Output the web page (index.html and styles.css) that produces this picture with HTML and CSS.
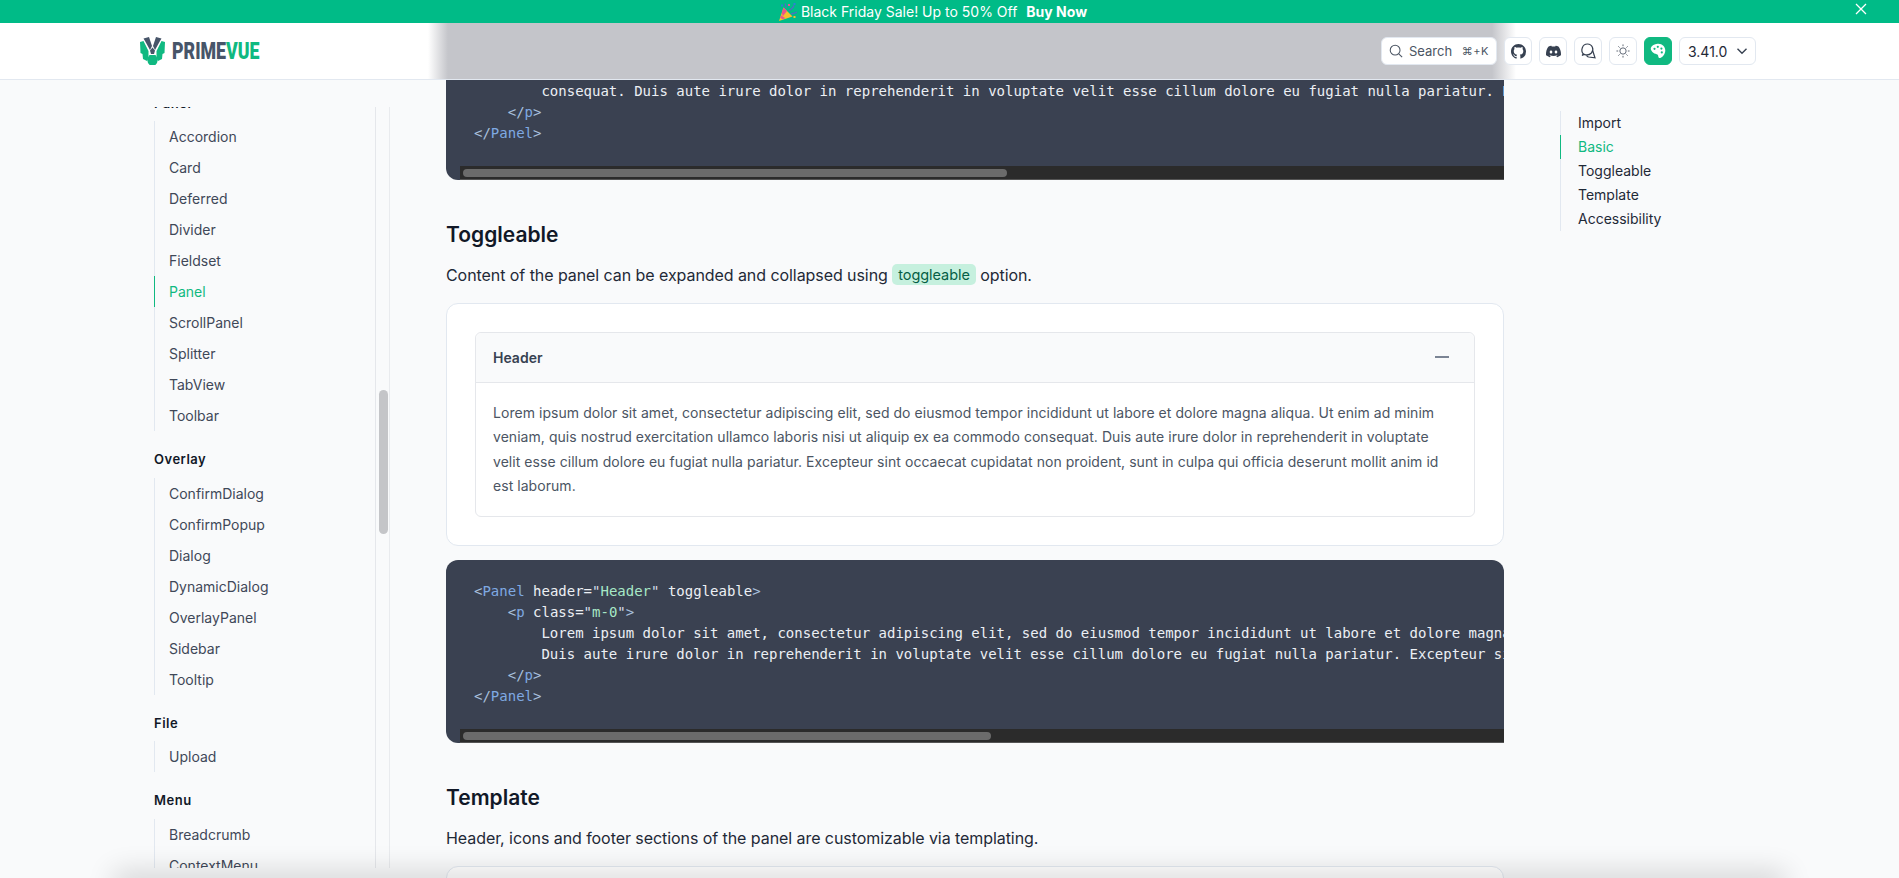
FILE: index.html
```html
<!DOCTYPE html>
<html lang="en">
<head>
    <meta charset="UTF-8">
    <meta name="viewport" content="width=device-width, initial-scale=1.0">
    <title>Panel - PrimeVue</title>
    <link rel="stylesheet" href="styles.css">
</head>
<body>

    <div class="banner">
        <svg class="popper" viewBox="0 0 18 18" width="18" height="18">
            <polygon points="0,18 4.500,4.500 13.500,13.500" fill="#f6c02d"/>
            <polygon points="2.700,10 4.500,4.500 8,8 3.900,13.200" fill="#e8558f"/>
            <polygon points="1.100,14.800 2,12.300 6.500,15.200 3.500,16.300" fill="#e8558f"/>
            <path d="M7 5 C7.500 3 6.500 2 6 .5 M10 8 C12 5 14 6 15 2.500 M12 11 C14 10 16 11 18 9" fill="none" stroke="#4f6bc8" stroke-width="1.200"/>
            <rect x="9" y="1" width="2" height="2" fill="#e8558f"/>
            <rect x="14.500" y="0" width="2" height="2" fill="#2f7fd6"/>
            <rect x="14.500" y="13" width="2" height="2" fill="#f6c02d"/>
            <rect x="2" y="1.500" width="2" height="2" fill="#2f7fd6"/>
        </svg>
        <span class="banner-text">Black Friday Sale! Up to 50% Off</span>
        <b class="banner-link">Buy Now</b>
        <svg class="banner-close" viewBox="0 0 12 12" width="12" height="12">
            <path d="M1 1 L11 11 M11 1 L1 11" stroke="#fff" stroke-width="1.300" fill="none"/>
        </svg>
    </div>

    <header class="topbar">
        <a class="logo">
            <svg viewBox="0 0 25 28.500" width="25" height="28.500">
                <polygon points="0,5 3.500,4 8.500,14 8.500,20 7,24 3,22 2.500,17 .5,16" fill="#10b981"/>
                <polygon points="25,5 21.500,4 16.500,14 16.500,20 18,24 22,22 22.500,17 24.500,16" fill="#10b981"/>
                <polygon points="9.500,18 15.500,18 18,22 17,26 15,28.500 10,28.500 8,26 7,22" fill="#10b981"/>
                <polygon points="3.500,1.500 9,0 12,9 10,13 5,4" fill="#475569"/>
                <polygon points="21.500,1.500 16,0 13,9 15,13 20,4" fill="#475569"/>
                <polygon points="10,13.500 12.500,10.500 15,13.500 14,17 11,17" fill="#475569"/>
            </svg>
            <span class="logo-name">PRIME<span class="logo-vue">VUE</span></span>
        </a>
        <div class="tools">
            <button class="search">
                <svg viewBox="0 0 16 16" width="14" height="14"><circle cx="7" cy="7" r="5.600" fill="none" stroke="#4b5563" stroke-width="1.200"/><path d="M11.200 11.200 L15 15" stroke="#4b5563" stroke-width="1.200"/></svg>
                <span class="search-label">Search</span>
                <span class="search-keys">⌘+K</span>
            </button>
            <button class="tool">
                <svg viewBox="0 0 16 16" width="15" height="15"><path fill="#374151" d="M8 0C3.580 0 0 3.580 0 8c0 3.540 2.290 6.530 5.470 7.590.4.070.55-.17.55-.38 0-.19-.01-.82-.01-1.490-2.010.37-2.530-.49-2.690-.94-.09-.23-.48-.94-.82-1.130-.28-.15-.68-.52-.01-.53.63-.01 1.080.58 1.230.82.72 1.210 1.870.87 2.330.66.07-.52.28-.87.51-1.070-1.780-.2-3.640-.89-3.640-3.950 0-.87.31-1.590.82-2.150-.08-.2-.36-1.020.08-2.120 0 0 .67-.21 2.200.82.64-.18 1.320-.27 2-.27.68 0 1.360.09 2 .27 1.530-1.040 2.200-.82 2.200-.82.44 1.100.16 1.920.08 2.120.51.56.82 1.270.82 2.150 0 3.070-1.870 3.750-3.650 3.950.29.25.54.73.54 1.480 0 1.070-.01 1.930-.01 2.200 0 .21.15.46.55.38A8.013 8.013 0 0016 8c0-4.420-3.580-8-8-8z"/></svg>
            </button>
            <button class="tool">
                <svg viewBox="0 0 16 16" width="15" height="15"><path fill="#374151" d="M13.545 2.907a13.227 13.227 0 0 0-3.257-1.011.05.05 0 0 0-.052.025c-.141.25-.297.577-.406.833a12.19 12.19 0 0 0-3.658 0 8.258 8.258 0 0 0-.412-.833.051.051 0 0 0-.052-.025c-1.125.194-2.22.534-3.257 1.011a.041.041 0 0 0-.021.018C.356 6.024-.213 9.047.066 12.032c.001.014.01.028.021.037a13.276 13.276 0 0 0 3.995 2.02.05.05 0 0 0 .056-.019c.308-.42.582-.863.818-1.329a.05.05 0 0 0-.01-.059.051.051 0 0 0-.018-.011 8.875 8.875 0 0 1-1.248-.595.05.05 0 0 1-.02-.066.051.051 0 0 1 .015-.019c.084-.063.168-.129.248-.195a.05.05 0 0 1 .051-.007c2.619 1.196 5.454 1.196 8.041 0a.052.052 0 0 1 .053.007c.08.066.164.132.248.195a.051.051 0 0 1-.004.085 8.254 8.254 0 0 1-1.249.594.05.05 0 0 0-.03.03.052.052 0 0 0 .003.041c.24.465.515.909.817 1.329a.05.05 0 0 0 .056.019 13.235 13.235 0 0 0 4.001-2.02.049.049 0 0 0 .021-.037c.334-3.451-.559-6.449-2.366-9.106a.034.034 0 0 0-.02-.019Zm-8.198 7.307c-.789 0-1.438-.724-1.438-1.612 0-.889.637-1.613 1.438-1.613.807 0 1.45.73 1.438 1.613 0 .888-.637 1.612-1.438 1.612Zm5.316 0c-.788 0-1.438-.724-1.438-1.612 0-.889.637-1.613 1.438-1.613.807 0 1.451.73 1.438 1.613 0 .888-.631 1.612-1.438 1.612Z"/></svg>
            </button>
            <button class="tool">
                <svg viewBox="0 0 16 16" width="16" height="16" fill="none" stroke="#374151" stroke-width="1.200"><path d="M3.400 11 C.2 7.500 2.400 1 7.400 1 C12.400 1 14.400 6.800 11.400 10 C9.400 12 6.200 12.200 4.200 11.400 L2 12.400 Z"/><path d="M12.800 8 L15 14.800 L8.600 14 C7.800 13.800 7 13.200 6.600 12.200"/></svg>
            </button>
            <button class="tool">
                <svg viewBox="0 0 16 16" width="14" height="14" fill="none" stroke="#4b5563" stroke-width="1"><circle cx="8" cy="8" r="3.600"/><path d="M8 .5v2M8 13.500v2M.5 8h2M13.500 8h2M2.700 2.700l1.400 1.400M11.900 11.900l1.400 1.400M2.700 13.300l1.400-1.400M11.900 4.100l1.400-1.400"/></svg>
            </button>
            <button class="tool tool-active">
                <svg viewBox="0 0 16 16" width="16" height="16"><path fill="#fff" d="M7.600.8C12 .4 15.400 3.600 15.300 7.600c-.1 3.600-2.600 6.600-5 7.400-1.200.4-2-.4-2-1.400 0-1.400-.6-2-1.600-2.400C5 10.600 3.600 10.400 2.400 9 1 7.400.5 6 .9 4.800 1.600 2.700 4.500 1.100 7.600.8Z"/><circle cx="4.500" cy="5.800" r="1.100" fill="#10b981"/><circle cx="7.800" cy="3.800" r="1.100" fill="#10b981"/><circle cx="11.400" cy="5.600" r="1.100" fill="#10b981"/><circle cx="11.800" cy="9.400" r="1.100" fill="#10b981"/></svg>
            </button>
            <button class="version">
                <span>3.41.0</span>
                <svg viewBox="0 0 12 12" width="12" height="12"><path d="M1.500 3.800 L6 8.200 L10.500 3.800" fill="none" stroke="#374151" stroke-width="1.400"/></svg>
            </button>
        </div>
    </header>

    <div class="layout">
        <nav class="sidebar">
            <div class="menu">
                <div class="menu-title">Panel</div>
                <ul class="menu-list">
                    <li>Accordion</li>
                    <li>Card</li>
                    <li>Deferred</li>
                    <li>Divider</li>
                    <li>Fieldset</li>
                    <li class="active">Panel</li>
                    <li>ScrollPanel</li>
                    <li>Splitter</li>
                    <li>TabView</li>
                    <li>Toolbar</li>
                </ul>
                <div class="menu-title">Overlay</div>
                <ul class="menu-list">
                    <li>ConfirmDialog</li>
                    <li>ConfirmPopup</li>
                    <li>Dialog</li>
                    <li>DynamicDialog</li>
                    <li>OverlayPanel</li>
                    <li>Sidebar</li>
                    <li>Tooltip</li>
                </ul>
                <div class="menu-title">File</div>
                <ul class="menu-list">
                    <li>Upload</li>
                </ul>
                <div class="menu-title">Menu</div>
                <ul class="menu-list">
                    <li>Breadcrumb</li>
                    <li>ContextMenu</li>
                    <li>Dock</li>
                </ul>
            </div>
        </nav>
        <div class="gutter"><div class="gutter-thumb"></div></div>

        <main class="content">
            <div class="code code-first">
<pre>        consequat. Duis aute irure dolor in reprehenderit in voluptate velit esse cillum dolore eu fugiat nulla pariatur. Excepteur sint occaecat
    <span class="p">&lt;/</span><span class="t">p</span><span class="p">&gt;</span>
<span class="p">&lt;/</span><span class="t">Panel</span><span class="p">&gt;</span></pre>
                <div class="code-track"><div class="code-thumb" style="width: 544px"></div></div>
            </div>

            <h2>Toggleable</h2>
            <p class="lead">Content of the panel can be expanded and collapsed using <code class="chip">toggleable</code> option.</p>
            <div class="card">
                <div class="panel">
                    <div class="panel-header">
                        <span>Header</span>
                        <span class="panel-minus"></span>
                    </div>
                    <p class="panel-body">Lorem ipsum dolor sit amet, consectetur adipiscing elit, sed do eiusmod tempor incididunt ut labore et dolore magna aliqua. Ut enim ad minim veniam, quis nostrud exercitation ullamco laboris nisi ut aliquip ex ea commodo consequat. Duis aute irure dolor in reprehenderit in voluptate velit esse cillum dolore eu fugiat nulla pariatur. Excepteur sint occaecat cupidatat non proident, sunt in culpa qui officia deserunt mollit anim id est laborum.</p>
                </div>
            </div>
            <div class="code">
<pre><span class="p">&lt;</span><span class="t">Panel</span> header=<span class="q">"</span><span class="s">Header</span><span class="q">"</span> toggleable<span class="p">&gt;</span>
    <span class="p">&lt;</span><span class="t">p</span> class=<span class="q">"</span><span class="s">m-0</span><span class="q">"</span><span class="p">&gt;</span>
        Lorem ipsum dolor sit amet, consectetur adipiscing elit, sed do eiusmod tempor incididunt ut labore et dolore magna aliqua.
        Duis aute irure dolor in reprehenderit in voluptate velit esse cillum dolore eu fugiat nulla pariatur. Excepteur sint occaecat
    <span class="p">&lt;/</span><span class="t">p</span><span class="p">&gt;</span>
<span class="p">&lt;/</span><span class="t">Panel</span><span class="p">&gt;</span></pre>
                <div class="code-track"><div class="code-thumb" style="width: 528px"></div></div>
            </div>

            <h2>Template</h2>
            <p class="lead">Header, icons and footer sections of the panel are customizable via templating.</p>
            <div class="card card-cut"></div>
        </main>

        <aside class="toc">
            <ul>
                <li>Import</li>
                <li class="active">Basic</li>
                <li>Toggleable</li>
                <li>Template</li>
                <li>Accessibility</li>
            </ul>
        </aside>
    </div>

    <div class="page-shadow"></div>

</body>
</html>
```

FILE: styles.css
```css
* {
    box-sizing: border-box;
}
html, body {
    height: 878px;
    overflow: hidden;
}
body {
    margin: 0;
    position: relative;
    background: #f9fafb;
    color: #111827;
    font-family: Inter, "Noto Sans", sans-serif;
    font-size: 14px;
}
ul {
    list-style: none;
    margin: 0;
    padding: 0;
}

/* top banner */
.banner {
    position: relative;
    z-index: 3;
    display: flex;
    align-items: center;
    justify-content: center;
    height: 23px;
    background: #00bb87;
    color: #fff;
    padding-right: 33px;
}
.popper {
    margin-right: 4px;
}
.banner-text {
    font-size: 14px;
}
.banner-link {
    margin-left: 9px;
    font-weight: 700;
    font-size: 14px;
}
.banner-close {
    position: absolute;
    right: 32px;
    top: 3px;
}

.topbar {
    position: absolute;
    z-index: 2;
    top: 23px;
    left: 0;
    right: 0;
    height: 57px;
    display: flex;
    align-items: center;
    justify-content: space-between;
    padding: 0 143px 0 140px;
    background: #fff;
    border-bottom: 1px solid #e2e8f0;
}
.topbar::before {
    content: "";
    position: absolute;
    top: 0;
    bottom: 0;
    left: 428px;
    width: 1088px;
    background: linear-gradient(to right, rgba(196, 197, 202, 0), #c4c5ca 20px, #c4c5ca 1064px, rgba(196, 197, 202, 0));
}
.logo, .tools {
    position: relative;
}
.logo {
    display: flex;
    align-items: center;
    gap: 7px;
}
.logo-name {
    display: block;
    width: 88px;
    font-family: Roboto, sans-serif;
    font-weight: 900;
    font-size: 24px;
    line-height: 28px;
    white-space: nowrap;
    color: #475569;
    transform: scaleX(0.74);
    transform-origin: left center;
}
.logo-vue {
    color: #10b981;
}
.tools {
    display: flex;
    gap: 7px;
    height: 28px;
}
button {
    display: flex;
    align-items: center;
    height: 28px;
    padding: 0;
    background: #fff;
    border: 1px solid #e2e8f0;
    border-radius: 6px;
    font-family: inherit;
    color: #4b5563;
}
.search {
    width: 116px;
    padding: 0 7px;
}
.search-label {
    margin-left: 6px;
    font-size: 13px;
}
.search-keys {
    margin-left: auto;
    font-size: 11px;
    letter-spacing: 0.5px;
}
.tool {
    width: 28px;
    justify-content: center;
}
.tool-active {
    background: #10b981;
    border-color: #10b981;
}
.version {
    width: 77px;
    padding: 0 7px 0 8px;
    justify-content: space-between;
    font-size: 14px;
    color: #1f2937;
}

/* page columns */
.layout {
    display: flex;
    height: 855px;
    padding-left: 154px;
}
.sidebar {
    flex: none;
    width: 222px;
    height: 761px;
    margin-top: 84px;
    overflow: hidden;
    border-right: 1px solid #e5e7eb;
}
.gutter {
    flex: none;
    width: 14px;
    height: 761px;
    margin-top: 84px;
    padding: 283px 1px 0 3px;
    border-right: 1px solid #e9ebee;
}
.gutter-thumb {
    height: 144px;
    background: #c4c5c8;
    border-radius: 5px;
}
.menu {
    margin-top: -14.5px;
}
.menu-title {
    margin-top: 18px;
    margin-bottom: 7.5px;
    font-size: 13px;
    line-height: 21px;
    font-weight: 600;
    letter-spacing: 0.5px;
    color: #111827;
}
.menu-title:first-child {
    margin-top: 0;
}
.menu-list {
    border-left: 1px solid #e2e8f0;
}
.menu-list li {
    height: 31px;
    line-height: 31px;
    margin-left: -1px;
    padding-left: 14px;
    border-left: 1px solid transparent;
    color: #3f4858;
}
.menu-list li.active {
    color: #10b981;
    border-left-color: #10b981;
}

/* main column */
.content {
    flex: none;
    width: 1058px;
    margin-left: 56px;
    overflow: hidden;
}
.code {
    position: relative;
    height: 183px;
    background: #3a4151;
    border-radius: 12px 12px 0 12px;
    overflow: hidden;
}
.code-first {
    margin-top: 57px;
    height: 100px;
    border-radius: 0 0 0 12px;
}
.code pre {
    margin: 0;
    padding: 21px 28px;
    font-family: "DejaVu Sans Mono", monospace;
    font-size: 14px;
    line-height: 21px;
    color: #eceff4;
}
.code-first pre {
    padding-top: 1px;
}
.code .p { color: #a9c0de; }
.code .t { color: #7fa9e2; }
.code .q { color: #d8dee9; }
.code .s { color: #a7e8c6; }
.code-track {
    position: absolute;
    left: 14px;
    right: 0;
    bottom: 0;
    height: 14px;
    padding-top: 3px;
    padding-left: 3px;
    background: #2b2b2b;
    border-bottom: 1px solid #555;
}
.code-thumb {
    height: 8px;
    background: #6b6b6b;
    border-radius: 4px;
}
h2 {
    margin: 42px 0 15px;
    font-size: 21px;
    line-height: 26px;
    font-weight: 600;
    color: #111827;
}
.lead {
    margin: 0 0 16px;
    font-size: 16px;
    line-height: 24px;
    letter-spacing: -0.065px;
    color: #1f2937;
}
.chip {
    display: inline-block;
    vertical-align: 1px;
    padding: 0 6px;
    height: 21px;
    line-height: 21px;
    background: #c6f0de;
    border-radius: 5px;
    font-family: Inter, sans-serif;
    font-size: 14.5px;
    color: #065f46;
}
.card {
    height: 243px;
    margin-bottom: 14px;
    padding: 28px;
    background: #fff;
    border: 1px solid #e2e8f0;
    border-radius: 12px;
}
.panel {
    border: 1px solid #e5e7eb;
    border-radius: 6px;
}
.panel-header {
    display: flex;
    align-items: center;
    justify-content: space-between;
    height: 50px;
    padding: 0 17px 1px;
    background: #f9fafb;
    border-bottom: 1px solid #e5e7eb;
    border-radius: 6px 6px 0 0;
    font-weight: 600;
    color: #374151;
}
.panel-minus {
    width: 14px;
    height: 2px;
    margin-right: 8px;
    background: #7b8494;
}
.panel-body {
    margin: 0;
    padding: 17.5px 17px 17px;
    font-size: 14px;
    line-height: 24.5px;
    letter-spacing: 0.05px;
    color: #4b5563;
}

/* page contents list */
.toc {
    margin-left: 56px;
    margin-top: 88px;
}
.toc ul {
    border-left: 1px solid #e2e8f0;
}
.toc li {
    height: 24px;
    line-height: 24px;
    margin-left: -1px;
    padding-left: 17px;
    border-left: 1px solid transparent;
    color: #1f2937;
}
.toc li.active {
    color: #10b981;
    border-left-color: #10b981;
}

/* soft shadow of whatever is below the fold */
.page-shadow {
    position: absolute;
    z-index: 1;
    left: 120px;
    right: 120px;
    bottom: -12px;
    height: 12px;
    box-shadow: 0 0 28px 6px rgba(0, 0, 0, 0.16);
    pointer-events: none;
}
```
